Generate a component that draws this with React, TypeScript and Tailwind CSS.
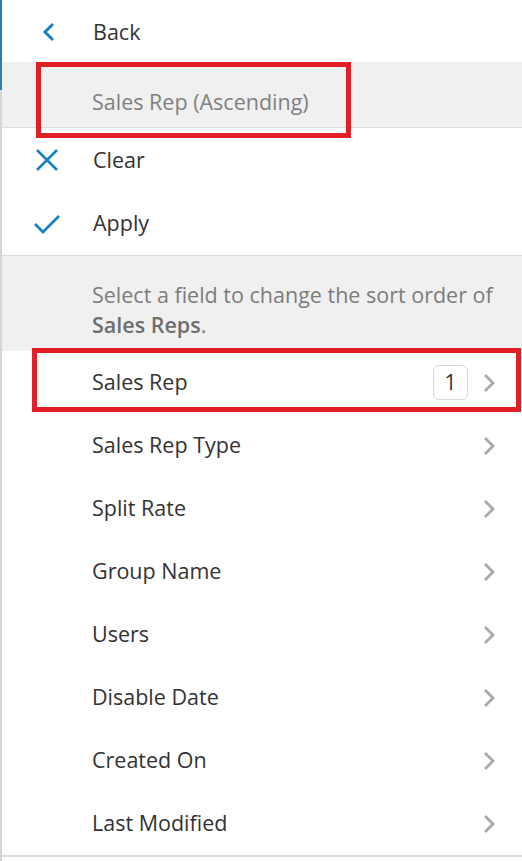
const font = { fontFamily: '"Segoe UI", "Open Sans", "Noto Sans", sans-serif' }

const fields = [
  'Sales Rep',
  'Sales Rep Type',
  'Split Rate',
  'Group Name',
  'Users',
  'Disable Date',
  'Created On',
  'Last Modified',
]

function ChevronRight() {
  return (
    <svg width="14" height="20" viewBox="0 0 14 20" className="shrink-0">
      <polyline points="3,2 11,10 3,18" fill="none" stroke="#a9a9a9" strokeWidth="2.8" />
    </svg>
  )
}

function ActionRow({ icon, label, h }: { icon: React.ReactNode; label: string; h: string }) {
  return (
    <div className={`flex items-center ${h}`}>
      <div className="w-[91px] flex justify-start pl-[33px]">{icon}</div>
      <span className="text-[21.5px] text-[#333]">{label}</span>
    </div>
  )
}

export default function App() {
  return (
    <div className="relative w-[522px] h-[861px] bg-white flex overflow-hidden" style={font}>
      {/* panel edge */}
      <div className="w-[2px] flex flex-col shrink-0">
        <div className="h-[90px] bg-[#2a7fb0]" />
        <div className="flex-1 bg-[#d6d6d6]" />
      </div>

      <div className="flex-1 flex flex-col">
        <ActionRow
          h="h-[62px] pt-[2px]"
          label="Back"
          icon={
            <svg width="22" height="24" viewBox="0 0 22 24" className="ml-[3px]">
              <polyline points="15,4 7,12 15,20" fill="none" stroke="#1a82c4" strokeWidth="3" />
            </svg>
          }
        />

        <div className="h-[66px] bg-[#f0f0f0] border-b border-[#dcdcdc] flex items-center pl-[90px] pt-[15px]">
          <span className="text-[21.5px] text-[#808080]">Sales Rep (Ascending)</span>
        </div>

        <ActionRow
          h="h-[64px]"
          label="Clear"
          icon={
            <svg width="26" height="26" viewBox="0 0 26 26" className="-ml-[1px]">
              <path d="M3 3 L23 23 M23 3 L3 23" stroke="#1a82c4" strokeWidth="2.6" />
            </svg>
          }
        />
        <ActionRow
          h="h-[63px]"
          label="Apply"
          icon={
            <svg width="28" height="22" viewBox="0 0 28 22" className="-ml-[2px]">
              <polyline points="2,11 10,19 26,3" fill="none" stroke="#1a82c4" strokeWidth="2.8" />
            </svg>
          }
        />

        <div className="h-[96px] bg-[#f0f0f0] border-t border-[#dcdcdc] pl-[90px] pr-2 pt-[24px] text-[21.5px] leading-[30px] text-[#7c7c7c]">
          Select a field to change the sort order of <b className="font-semibold text-[#6e6e6e]">Sales Reps</b>.
        </div>

        {fields.map((f, i) => (
          <div key={f} className="h-[63px] flex items-center pl-[90px] pr-[26px]">
            <span className="flex-1 text-[21.5px] text-[#333]">{f}</span>
            {i === 0 && (
              <span className="w-[35px] h-[35px] mr-[14px] rounded-[6px] border border-[#d8d8d8] flex items-center justify-center text-[21px] text-[#333]">
                1
              </span>
            )}
            <ChevronRight />
          </div>
        ))}
        <div className="h-[2px] bg-[#dcdcdc]" />
      </div>

      {/* highlight boxes */}
      <div className="absolute left-[36px] top-[62px] w-[315px] h-[76px] border-[5px] border-[#e21f26]" />
      <div className="absolute left-[32px] top-[348px] w-[489px] h-[64px] border-[5px] border-[#e21f26]" />
    </div>
  )
}
